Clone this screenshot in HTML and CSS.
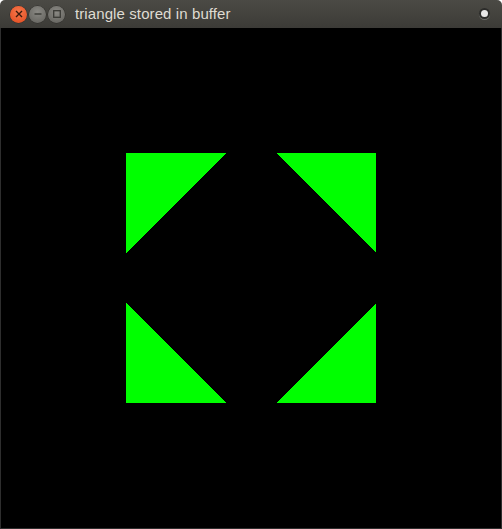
FILE: index.html
```html
<!DOCTYPE html>
<html>
<head>
<meta charset="utf-8">
<title>triangle stored in buffer</title>
<link rel="stylesheet" href="styles.css">
</head>
<body>
<div class="window">
  <div class="titlebar">
    <div class="controls">
      <span class="btn close">
        <svg width="8" height="8" viewBox="0 0 8 8"><path d="M1 1L7 7M7 1L1 7" stroke="#3a1a0c" stroke-width="1.4"/></svg>
      </span>
      <span class="btn">
        <svg width="8" height="8" viewBox="0 0 8 8"><path d="M0.5 4H7.5" stroke="#3a3a36" stroke-width="1.4"/></svg>
      </span>
      <span class="btn">
        <svg width="8" height="8" viewBox="0 0 8 8"><rect x="0.7" y="0.7" width="6.6" height="6.6" fill="none" stroke="#3a3a36" stroke-width="1.3"/></svg>
      </span>
    </div>
    <div class="title">triangle stored in buffer</div>
    <div class="menu-dot"></div>
  </div>
  <div class="content">
    <svg class="canvas" width="500" height="500" viewBox="0 0 500 500">
      <rect width="500" height="500" fill="#000"/>
      <polygon points="125,125 225,125 125,225" fill="#00ff00"/>
      <polygon points="275,125 375,125 375,225" fill="#00ff00"/>
      <polygon points="125,275 125,375 225,375" fill="#00ff00"/>
      <polygon points="375,275 375,375 275,375" fill="#00ff00"/>
    </svg>
  </div>
</div>
</body>
</html>
```
FILE: styles.css
```css
html, body {
  margin: 0;
  padding: 0;
  background: #ffffff;
}
.window {
  width: 502px;
  height: 529px;
  display: flex;
  flex-direction: column;
}
.titlebar {
  height: 28px;
  flex: none;
  display: flex;
  align-items: center;
  background: linear-gradient(#4b4a45, #3c3b37);
  border-radius: 5px 5px 0 0;
  position: relative;
}
.controls {
  display: flex;
  gap: 2px;
  margin-left: 10px;
}
.btn {
  width: 17px;
  height: 17px;
  border-radius: 50%;
  background: radial-gradient(circle at 50% 35%, #8a8984, #605f5a);
  box-shadow: 0 0 0 0.5px #2e2d2a;
  display: flex;
  align-items: center;
  justify-content: center;
}
.btn.close {
  background: radial-gradient(circle at 50% 35%, #f7784c, #e0491d);
}
.title {
  margin-left: 10px;
  font-family: "Liberation Sans", "DejaVu Sans", sans-serif;
  font-size: 15px;
  color: #dfdbd2;
  letter-spacing: 0.1px;
  padding-bottom: 1px;
}
.menu-dot {
  position: absolute;
  right: 14px;
  top: 10px;
  width: 7px;
  height: 7px;
  border-radius: 50%;
  background: #e8e8e8;
  box-shadow: 0 0 0 2px #2c2c2a, 0 1px 0 2px #6a6a66;
}
.content {
  flex: 1;
  border: 1px solid #2e2e2e;
  border-top: none;
  display: flex;
  background: #000;
}
.canvas {
  display: block;
  shape-rendering: crispEdges;
}
```
